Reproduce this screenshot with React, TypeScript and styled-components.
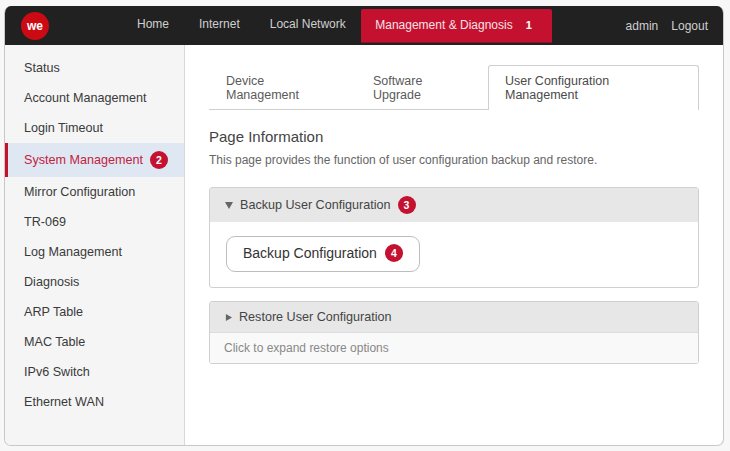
import React from "react";
import styled, { createGlobalStyle } from "styled-components";

const Global = createGlobalStyle`
  html, body { margin: 0; padding: 0; background: #f7f7f7; }
  body { font-family: "Liberation Sans", Arial, sans-serif; }
  * { box-sizing: border-box; }
`;
const Page = styled.div`
  width: 730px; height: 451px; padding: 6px 6px 5px 4px;
`;
const Frame = styled.div`
  width: 720px; height: 440px; display: flex; flex-direction: column;
  background: #fff; border: 1px solid #c8c8c8; border-top: 0; border-radius: 7px; overflow: hidden;
`;
const TopBar = styled.header`
  height: 39px; flex: none; background: #212121; display: flex; align-items: flex-start; margin: 0 -1px;
`;
const Logo = styled.div`
  width: 28px; height: 28px; margin: 6px 0 0 17px; border-radius: 50%; background: #cc0a14; color: #fff;
  display: flex; align-items: center; justify-content: center; font-size: 12px; font-weight: 700; flex: none;
`;
const Nav = styled.nav`
  display: flex; margin-left: 88px; align-items: flex-start;
`;
const NavLink = styled.a`
  color: #cfcfcf; font-size: 12px; line-height: 14px; padding-top: 11px; margin-right: 30px;
`;
const NavActive = styled.a`
  margin: 3px 0 0 -15px; width: 191px; height: 34px; background: #c4112f; color: #f6e3e6; border-radius: 2px 2px 0 0;
  border-bottom: 1px solid #8f1026; font-size: 12px; display: flex; align-items: center; padding: 0 0 1px 14.5px; gap: 13px;
`;
const NavNum = styled.span`
  color: #fff; font-weight: 700; font-size: 11px;
`;
const UserArea = styled.div`
  margin-left: auto; display: flex; gap: 13px; padding: 13px 16px 0 0; font-size: 12px; line-height: 14px; color: #cfcfcf;
`;
const Body = styled.div`
  flex: 1; display: flex; min-height: 0;
`;
const Sidebar = styled.aside`
  width: 180px; flex: none; background: #f5f5f5; border-right: 1px solid #d8d8d8; padding-top: 8px;
`;
const SideItem = styled.div<{ $active?: boolean }>`
  display: flex; align-items: center; gap: 7px; height: ${p => (p.$active ? 34 : 30)}px;
  padding-left: ${p => (p.$active ? 16 : 19)}px; font-size: 12.6px;
  color: ${p => (p.$active ? "#c4213f" : "#3a3a3a")};
  background: ${p => (p.$active ? "#dfe8f2" : "transparent")};
  border-left: ${p => (p.$active ? "3px solid #c4112f" : "0")};
`;
const Badge = styled.span`
  width: 18px; height: 18px; border-radius: 50%; background: #c4112f; color: #fff; font-size: 10.5px; font-weight: 700;
  display: inline-flex; align-items: center; justify-content: center; flex: none;
`;
const Main = styled.main`
  flex: 1; padding: 20px 24px 0 24px; min-width: 0;
`;
const Tabs = styled.div`
  display: flex; height: 45px; border-bottom: 1px solid #cfcfcf; width: 490px;
`;
const Tab = styled.div<{ $w: number; $active?: boolean }>`
  width: ${p => p.$w}px; height: ${p => (p.$active ? 45 : 44)}px; flex: none; font-size: 12.5px; line-height: 14px;
  color: ${p => (p.$active ? "#4a4a4a" : "#5a5a5a")};
  padding: ${p => (p.$active ? "8px 16px 0" : "9px 17px 0")};
  background: #fff;
  ${p => p.$active && "border: 1px solid #cfcfcf; border-bottom: 0; border-radius: 3px 3px 0 0;"}
`;
const Title = styled.h2`
  margin: 18px 0 0; font-size: 15px; line-height: 17px; font-weight: 400; color: #444;
`;
const Desc = styled.p`
  margin: 8px 0 0; font-size: 12px; line-height: 14px; color: #666;
`;
const Panel = styled.section<{ $top: number; $h: number }>`
  width: 490px; height: ${p => p.$h}px; margin-top: ${p => p.$top}px; border: 1px solid #d0d0d0; border-radius: 3px; overflow: hidden;
`;
const PanelHead = styled.div<{ $h: number }>`
  height: ${p => p.$h}px; background: #e7e7e7; display: flex; align-items: center; padding-left: 15px;
  font-size: 12.6px; color: #444; gap: 7px;
`;
const Caret = styled.svg<{ $s: number }>`
  width: ${p => p.$s}px; height: ${p => p.$s}px; flex: none; fill: #666;
`;
const PanelBody = styled.div`
  padding: 14px 16px;
`;
const Button = styled.button`
  width: 194px; height: 36px; background: #fff; border: 1px solid #bdbdbd; border-radius: 9px; font: 14px "Liberation Sans", Arial, sans-serif;
  color: #333; display: flex; align-items: center; gap: 8px; padding: 0 0 2px 16px;
`;
const Hint = styled.div`
  height: 31px; background: #f9f9f9; border-top: 1px solid #ddd; font-size: 12px; color: #888; display: flex; align-items: center; padding-left: 14px;
`;

const sideItems = ["Status", "Account Management", "Login Timeout"];
const sideItems2 = ["Mirror Configuration", "TR-069", "Log Management", "Diagnosis", "ARP Table", "MAC Table", "IPv6 Switch", "Ethernet WAN"];

export default function App() {
  return (
    <Page>
      <Global />
      <Frame>
        <TopBar>
          <Logo>we</Logo>
          <Nav>
            <NavLink>Home</NavLink>
            <NavLink>Internet</NavLink>
            <NavLink>Local Network</NavLink>
            <NavActive>Management &amp; Diagnosis <NavNum>1</NavNum></NavActive>
          </Nav>
          <UserArea><span>admin</span><span>Logout</span></UserArea>
        </TopBar>
        <Body>
          <Sidebar>
            {sideItems.map(s => <SideItem key={s}>{s}</SideItem>)}
            <SideItem $active>System Management <Badge>2</Badge></SideItem>
            {sideItems2.map(s => <SideItem key={s}>{s}</SideItem>)}
          </Sidebar>
          <Main>
            <Tabs>
              <Tab $w={147}>Device<br />Management</Tab>
              <Tab $w={132}>Software<br />Upgrade</Tab>
              <Tab $w={211} $active>User Configuration<br />Management</Tab>
            </Tabs>
            <Title>Page Information</Title>
            <Desc>This page provides the function of user configuration backup and restore.</Desc>
            <Panel $top={20} $h={101}>
              <PanelHead $h={34}>
                <Caret $s={8} viewBox="0 0 8 8"><path d="M0 1h8L4 8z" /></Caret>
                Backup User Configuration <Badge>3</Badge>
              </PanelHead>
              <PanelBody>
                <Button>Backup Configuration <Badge>4</Badge></Button>
              </PanelBody>
            </Panel>
            <Panel $top={13} $h={63}>
              <PanelHead $h={30}>
                <Caret $s={7} viewBox="0 0 8 8"><path d="M1 0l7 4-7 4z" /></Caret>
                Restore User Configuration
              </PanelHead>
              <Hint>Click to expand restore options</Hint>
            </Panel>
          </Main>
        </Body>
      </Frame>
    </Page>
  );
}
